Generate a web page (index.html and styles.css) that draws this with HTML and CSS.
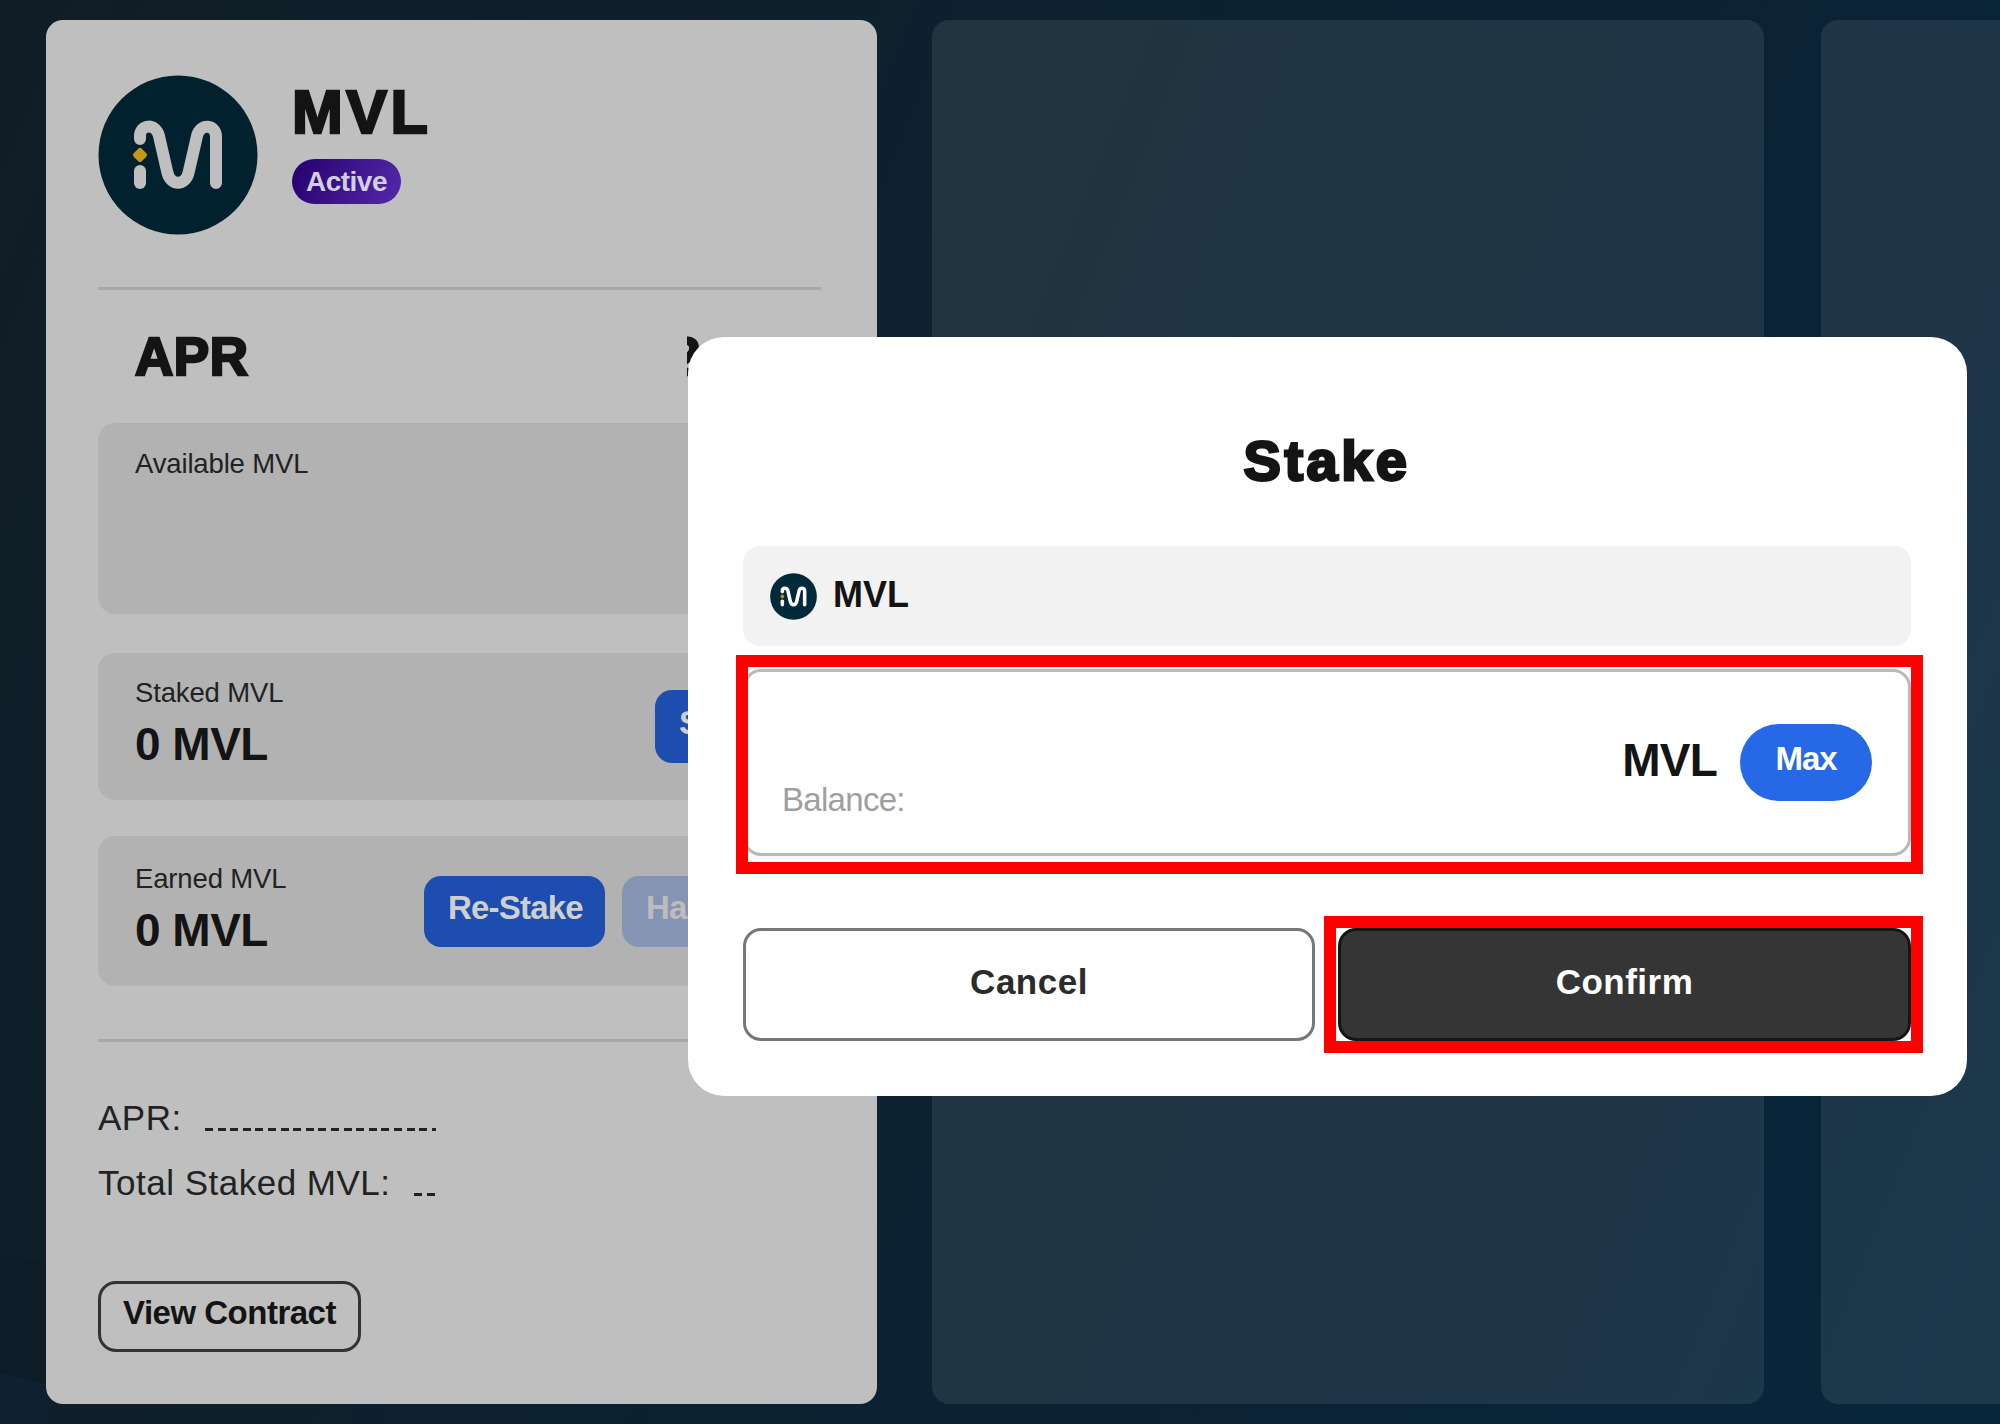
FILE: index.html
```html
<!DOCTYPE html>
<html lang="en">
<head>
    <meta charset="UTF-8">
    <meta name="viewport" content="width=device-width, initial-scale=1.0">
    <title>Stake MVL</title>
    <link rel="stylesheet" href="styles.css">
</head>
<body>
    <svg width="0" height="0" class="sprite">
        <symbol id="mvl-logo" viewBox="0 0 160 160">
            <circle cx="80" cy="80" r="79.5" fill="var(--logo-bg)"/>
            <g fill="none" stroke="var(--logo-line)" stroke-width="12" stroke-linecap="round" stroke-linejoin="round">
                <path d="M42 64V61C42 49 58 48 61 61L69.500 98C73 111 87 111 90.500 98L99 61C102 48 118 49 118 62V108"/>
                <path d="M42 96V108"/>
            </g>
            <path d="M42 75.500L46.500 80L42 84.500L37.500 80Z" fill="var(--logo-dot)" stroke="var(--logo-dot)" stroke-width="5" stroke-linejoin="round"/>
        </symbol>
    </svg>

    <main class="pools">
        <section class="card">
            <div class="card-header">
                <svg class="logo"><use href="#mvl-logo"/></svg>
                <div class="card-name">
                    <h1>MVL</h1>
                    <span class="badge">Active</span>
                </div>
            </div>
            <hr>
            <div class="apr-row">
                <h2>APR</h2>
                <span class="apr-value">2</span>
            </div>

            <div class="panel available">
                <p class="label">Available MVL</p>
            </div>
            <div class="panel staked">
                <div>
                    <p class="label">Staked MVL</p>
                    <p class="amount">0 MVL</p>
                </div>
                <button class="btn btn-stake">Stake</button>
            </div>
            <div class="panel earned">
                <div>
                    <p class="label">Earned MVL</p>
                    <p class="amount">0 MVL</p>
                </div>
                <div class="panel-actions">
                    <button class="btn btn-restake">Re-Stake</button>
                    <button class="btn btn-harvest" disabled>Harvest</button>
                </div>
            </div>
            <hr>

            <div class="info">
                <div class="info-row"><span>APR:</span><i class="dashes"></i></div>
                <div class="info-row"><span>Total Staked MVL:</span><i class="dashes"></i></div>
            </div>
            <button class="view-contract">View Contract</button>
        </section>

        <section class="card empty"></section>
        <section class="card empty"></section>
    </main>

    <div class="modal">
        <h2>Stake</h2>
        <div class="token">
            <svg class="logo-small"><use href="#mvl-logo"/></svg>
            <span>MVL</span>
        </div>
        <div class="amount-box highlight">
            <span class="balance">Balance:</span>
            <span class="unit">MVL</span>
            <button class="max">Max</button>
        </div>
        <div class="modal-actions">
            <button class="cancel">Cancel</button>
            <div class="confirm-wrap highlight">
                <button class="confirm">Confirm</button>
            </div>
        </div>
    </div>
</body>
</html>
```

FILE: styles.css
```css
:root {
    --logo-bg: #00212d;
    --logo-line: #bfbfbf;
    --logo-dot: #c29a18;
    --text: #141414;
    --blue: #1d4dae;
}

* {
    margin: 0;
    padding: 0;
    box-sizing: border-box;
}

body {
    width: 2000px;
    height: 1424px;
    overflow: hidden;
    position: relative;
    font-family: "Liberation Sans", Arial, sans-serif;
    color: var(--text);
    background:
        radial-gradient(circle at -60px 1770px, #0f212f 400px, transparent 401px) 0 0 / 46px 100% no-repeat,
        radial-gradient(circle at -60px 1650px, #0d1c26 400px, transparent 401px) 0 0 / 46px 100% no-repeat,
        linear-gradient(112deg, #111d26 0%, #0d212e 40%, #0a2336 75%, #07263b 100%);
}

.sprite {
    position: absolute;
}

button {
    font-family: inherit;
    font-weight: bold;
    border: none;
}

hr {
    height: 3px;
    border: none;
    background: #a8a8a8;
}

.pools {
    display: flex;
    gap: 57px;
    width: 2000px;
    overflow: hidden;
    padding: 20px 0 0 46px;
}

.card {
    flex: none;
    width: 832px;
    height: 1384px;
    padding: 55px 56px 0 52px;
    border-radius: 17px;
    background: #bfbfbf;
}

.card:first-child {
    width: 831px;
    margin-right: -2px;
}

.card.empty {
    background: rgba(255, 255, 255, 0.085);
}

.card-header {
    display: flex;
    gap: 34px;
    height: 160px;
    margin-bottom: 52px;
}

.logo {
    width: 160px;
    height: 160px;
}

.card-name {
    padding-top: 8px;
}

.card-name h1 {
    font-size: 61px;
    line-height: 59px;
    letter-spacing: 3.5px;
    -webkit-text-stroke: 2.5px var(--text);
}

.badge {
    display: block;
    width: 109px;
    height: 45px;
    margin-top: 17px;
    border-radius: 23px;
    background: linear-gradient(115deg, #25006c, #5429ab);
    color: #d4cfe0;
    font-size: 28px;
    font-weight: bold;
    line-height: 46px;
    text-align: center;
    letter-spacing: -0.5px;
}

.apr-row {
    display: flex;
    justify-content: space-between;
    padding: 0 37px;
    margin: 36px 0 37px;
    font-size: 53px;
    font-weight: bold;
    line-height: 61px;
    height: 60px;
    letter-spacing: 0.5px;
    -webkit-text-stroke: 2.5px var(--text);
}

.apr-row h2 {
    font-size: inherit;
}

.apr-value {
    width: 97px;
    overflow: hidden;
    text-indent: -16px;
}

.panel {
    display: flex;
    justify-content: space-between;
    padding: 25px 37px 0;
    border-radius: 17px;
    background: #b2b2b2;
}

.available {
    height: 191px;
    margin-bottom: 39px;
}

.staked {
    height: 147px;
    margin-bottom: 36px;
}

.earned {
    height: 150px;
    padding-top: 28px;
    margin-bottom: 53px;
}

.label {
    font-size: 27.500px;
    line-height: 32px;
    letter-spacing: -0.15px;
    color: #222;
}

.staked .label,
.earned .label {
    margin-top: -1px;
}

.amount {
    margin-top: 9px;
    font-size: 46px;
    font-weight: bold;
    line-height: 52px;
    letter-spacing: -0.5px;
}

.btn {
    display: block;
    height: 71px;
    padding: 15px 0 23px 24px;
    border-radius: 17px;
    background: var(--blue);
    color: #cfcfcf;
    font-size: 33px;
    line-height: 32px;
    letter-spacing: -0.8px;
    text-align: left;
}

.btn-stake {
    width: 129px;
    height: 73px;
    margin-top: 12px;
}

.panel-actions {
    display: flex;
    gap: 17px;
    margin-top: 12px;
}

.btn-restake {
    width: 181px;
}

.btn-harvest {
    width: 162px;
    background: #8594b3;
    color: #bdbdbd;
}

.info {
    display: flex;
    flex-direction: column;
    gap: 25px;
    width: 338px;
    margin: 56px 0 78px;
}

.info-row {
    display: flex;
    gap: 23px;
    font-size: 35px;
    line-height: 40px;
    letter-spacing: 0.5px;
    color: #222;
}

.dashes {
    flex: 1;
    height: 3px;
    margin-top: 30px;
    background: repeating-linear-gradient(90deg, #222 0 8px, transparent 8px 12.6px);
}

.view-contract {
    display: block;
    width: 263px;
    height: 71px;
    padding: 12px 0 22px;
    border: 3px solid #333;
    border-radius: 18px;
    background: none;
    color: var(--text);
    font-size: 33px;
    line-height: 34px;
    letter-spacing: -0.5px;
}

/* stake dialog */
.modal {
    --logo-bg: #002a3a;
    --logo-line: #fff;
    position: absolute;
    left: 688px;
    top: 337px;
    width: 1279px;
    height: 759px;
    padding: 93px 56px 0 55px;
    border-radius: 36px;
    background: #fff;
}

.modal h2 {
    font-size: 56px;
    line-height: 62px;
    height: 60px;
    letter-spacing: 3.5px;
    text-align: center;
    -webkit-text-stroke: 2.8px var(--text);
}

.token {
    display: flex;
    align-items: center;
    gap: 16px;
    height: 100px;
    margin: 56px 0 23px;
    padding-left: 27px;
    border-radius: 17px;
    background: #f2f2f2;
    font-size: 36px;
    font-weight: bold;
    line-height: 40px;
}

.logo-small {
    width: 47px;
    height: 47px;
}

.token span {
    margin-top: -3px;
}

/* red marker frame around the fields to fill in */
.highlight {
    position: relative;
}

.highlight::after {
    content: "";
    position: absolute;
    border: 12px solid #f00;
}

.amount-box {
    display: flex;
    align-items: center;
    height: 187px;
    padding: 0 36px 0 36px;
    border: 3px solid #b9b9b9;
    border-radius: 18px;
}

.amount-box::after {
    inset: -17px -15px -21px -10px;
}

.balance {
    flex: 1;
    padding-top: 74px;
    color: #9f9f9f;
    font-size: 33px;
    line-height: 40px;
    letter-spacing: -0.7px;
}

.unit {
    margin-right: 23px;
    padding-bottom: 6px;
    font-size: 46px;
    font-weight: bold;
    letter-spacing: -0.8px;
}

.max {
    width: 132px;
    height: 77px;
    padding-bottom: 7px;
    border-radius: 39px;
    background: #2768e6;
    color: #fff;
    font-size: 33px;
    letter-spacing: -1px;
}

.modal-actions {
    display: flex;
    justify-content: space-between;
    margin-top: 72px;
}

.cancel,
.confirm {
    width: 572px;
    height: 113px;
    padding-bottom: 5px;
    border: 3px solid #777;
    border-radius: 18px;
    background: #fff;
    color: #2b2b2b;
    font-size: 35px;
    letter-spacing: 0.5px;
}

.confirm {
    display: block;
    width: 573px;
    border-color: #151515;
    background: #353535;
    color: #fff;
}

.confirm-wrap::after {
    inset: -12px -12px -12px -14px;
}
```
